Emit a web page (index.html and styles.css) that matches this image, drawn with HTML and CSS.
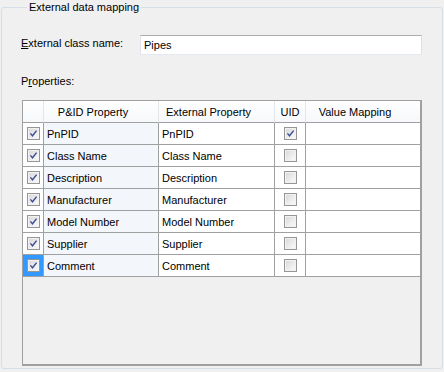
FILE: index.html
```html
<!DOCTYPE html>
<html>
<head>
<meta charset="utf-8">
<link rel="stylesheet" href="styles.css">
</head>
<body>
<fieldset class="group">
  <legend class="legend">External data mapping</legend>
  <div class="name-row">
    <label class="label"><u>E</u>xternal class name:</label>
    <div class="textbox">Pipes</div>
  </div>
  <div class="props-label">P<u>r</u>operties:</div>
  <div class="grid">
    <table class="tbl">
      <colgroup>
        <col class="c0"><col class="c1"><col class="c2"><col class="c3"><col class="c4">
      </colgroup>
      <thead>
        <tr>
          <th class="h0"></th>
          <th class="hs">P&amp;ID Property</th>
          <th class="hs">External Property</th>
          <th class="hn">UID</th>
          <th class="hs last">Value Mapping</th>
        </tr>
      </thead>
      <tbody>
        <tr><td class="rh"><span class="cb on"><svg width="11" height="11" viewBox="0 0 11 11"><path d="M2.4 5.4 L4.5 7.8 L8.6 2.6" fill="none" stroke="#3d4f95" stroke-width="1.4"/></svg></span></td><td class="pid">PnPID</td><td>PnPID</td><td class="uid"><span class="cb on"><svg width="11" height="11" viewBox="0 0 11 11"><path d="M2.4 5.4 L4.5 7.8 L8.6 2.6" fill="none" stroke="#3d4f95" stroke-width="1.4"/></svg></span></td><td class="last"></td></tr>
        <tr><td class="rh"><span class="cb on"><svg width="11" height="11" viewBox="0 0 11 11"><path d="M2.4 5.4 L4.5 7.8 L8.6 2.6" fill="none" stroke="#3d4f95" stroke-width="1.4"/></svg></span></td><td class="pid">Class Name</td><td>Class Name</td><td class="uid"><span class="cb"></span></td><td class="last"></td></tr>
        <tr><td class="rh"><span class="cb on"><svg width="11" height="11" viewBox="0 0 11 11"><path d="M2.4 5.4 L4.5 7.8 L8.6 2.6" fill="none" stroke="#3d4f95" stroke-width="1.4"/></svg></span></td><td class="pid">Description</td><td>Description</td><td class="uid"><span class="cb"></span></td><td class="last"></td></tr>
        <tr><td class="rh"><span class="cb on"><svg width="11" height="11" viewBox="0 0 11 11"><path d="M2.4 5.4 L4.5 7.8 L8.6 2.6" fill="none" stroke="#3d4f95" stroke-width="1.4"/></svg></span></td><td class="pid">Manufacturer</td><td>Manufacturer</td><td class="uid"><span class="cb"></span></td><td class="last"></td></tr>
        <tr><td class="rh"><span class="cb on"><svg width="11" height="11" viewBox="0 0 11 11"><path d="M2.4 5.4 L4.5 7.8 L8.6 2.6" fill="none" stroke="#3d4f95" stroke-width="1.4"/></svg></span></td><td class="pid">Model Number</td><td>Model Number</td><td class="uid"><span class="cb"></span></td><td class="last"></td></tr>
        <tr><td class="rh"><span class="cb on"><svg width="11" height="11" viewBox="0 0 11 11"><path d="M2.4 5.4 L4.5 7.8 L8.6 2.6" fill="none" stroke="#3d4f95" stroke-width="1.4"/></svg></span></td><td class="pid">Supplier</td><td>Supplier</td><td class="uid"><span class="cb"></span></td><td class="last"></td></tr>
        <tr><td class="rh sel"><span class="cb on"><svg width="11" height="11" viewBox="0 0 11 11"><path d="M2.4 5.4 L4.5 7.8 L8.6 2.6" fill="none" stroke="#3d4f95" stroke-width="1.4"/></svg></span></td><td class="pid">Comment</td><td>Comment</td><td class="uid"><span class="cb"></span></td><td class="last"></td></tr>
      </tbody>
    </table>
  </div>
</fieldset>
</body>
</html>
```

FILE: styles.css
```css
html, body {
  margin: 0;
  padding: 0;
  background: #f0f0f0;
}
body {
  font-family: "Liberation Sans", Arial, sans-serif;
  font-size: 11px;
  color: #000;
  width: 444px;
  height: 372px;
  overflow: hidden;
}
.group {
  margin: 0 1px 0 1px;
  height: 369px;
  box-sizing: border-box;
  border: 1px solid #d5dfe5;
  border-radius: 3px;
  padding: 0 20px 0 19px;
  min-width: 0;
}
.legend {
  padding: 0 2px;
  margin-left: 6px;
  line-height: 14px;
  font-size: 11px;
}
.name-row {
  display: flex;
  align-items: center;
  margin-top: 21px;
}
.label {
  width: 119px;
  flex: none;
  line-height: 13px;
  margin-top: -4px;
}
.textbox {
  flex: 1;
  height: 20px;
  box-sizing: border-box;
  background: #fff;
  border: 1px solid #dbdfe6;
  border-top-color: #abadb3;
  border-left-color: #e2e3ea;
  border-right-color: #dbdfe6;
  border-bottom-color: #e3e9ef;
  padding: 0 3px;
  line-height: 18px;
}
.props-label {
  margin-top: 20px;
  line-height: 13px;
}
.grid {
  margin-top: 12px;
  margin-left: 1px;
  width: 400px;
  height: 266px;
  box-sizing: border-box;
  border-left: 1px solid #a0a0a0;
  border-top: 1px solid #a0a0a0;
  border-right: 2px solid #a0a0a0;
  border-bottom: 2px solid #a0a0a0;
  background: #f0f0f0;
}
.tbl {
  border-collapse: separate;
  border-spacing: 0;
  table-layout: fixed;
  width: 397px;
}
.c0 { width: 21px; }
.c1 { width: 115px; }
.c2 { width: 116px; }
.c3 { width: 31px; }
.c4 { width: 114px; }
.tbl th {
  height: 22px;
  padding: 0 16px 0 0;
  font-weight: normal;
  background: linear-gradient(#ffffff, #f6f8fb);
  border-right: 1px solid #e4e6ea;
  border-bottom: 1px solid #a0a0a0;
  text-align: center;
  white-space: nowrap;
  box-sizing: border-box;
}
.tbl th.hn { padding: 0; }
.tbl th.h0 { padding: 0; }
.tbl th.last { border-right: none; }
.tbl td {
  height: 22px;
  box-sizing: border-box;
  padding: 0 3px;
  background: #fff;
  border-right: 1px solid #a0a0a0;
  border-bottom: 1px solid #a0a0a0;
  white-space: nowrap;
  overflow: hidden;
}
.tbl td.last { border-right: none; }
.tbl td.pid { background: #f3f6fb; }
.tbl td.rh {
  padding: 0;
  text-align: center;
  background: #fff;
}
.tbl td.rh.sel { background: #3399ff; }
.tbl td.uid {
  padding: 0;
  text-align: center;
}
.cb {
  display: inline-block;
  vertical-align: middle;
  width: 13px;
  height: 13px;
  box-sizing: border-box;
  border: 1px solid #969696;
  background: linear-gradient(135deg, #d6d6d6 0%, #eeeeee 60%, #fbfbfb 100%);
  box-shadow: inset 0 0 0 1px #f2f2f2;
}
.cb svg {
  display: block;
}
```
